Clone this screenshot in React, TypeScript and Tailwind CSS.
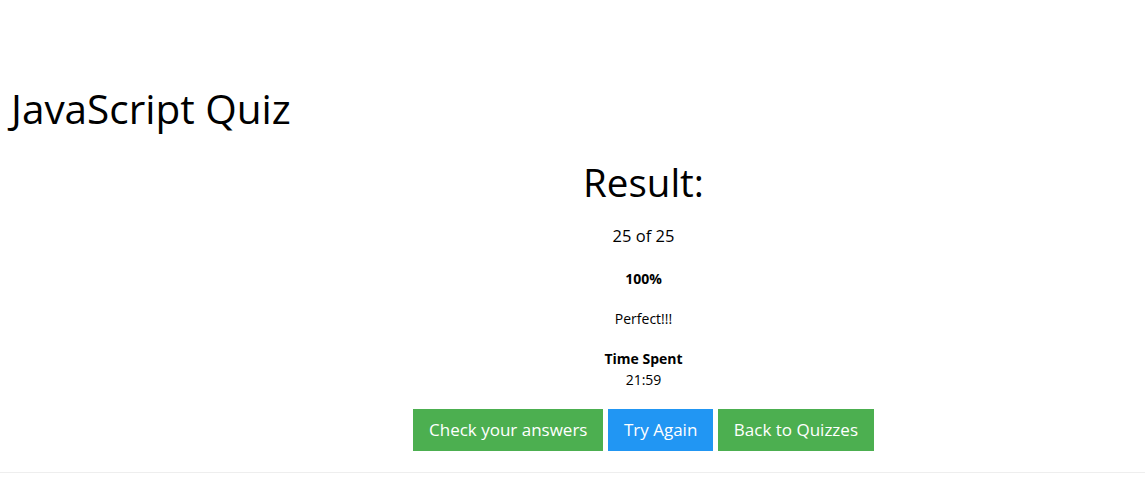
export default function App() {
  return (
    <div className="min-h-[477px] bg-white text-black font-['Open_Sans',sans-serif]">
      <div className="pt-[85px]">
        <h1 className="pl-[11px] text-[40.5px] leading-[1.2] font-normal">JavaScript Quiz</h1>

        <div className="pl-[142px] text-center">
          <h2 className="mt-[25px] text-[38.5px] leading-[1.2] font-normal">Result:</h2>
          <p className="mt-[19px] text-[16.5px] leading-[1.5]">25 of 25</p>
          <p className="mt-[19px] text-[14px] leading-[1.5] font-bold">100%</p>
          <p className="mt-[19px] text-[14px] leading-[1.5]">Perfect!!!</p>
          <div className="mt-[19px] text-[14px] leading-[1.5]">
            <p className="font-bold">Time Spent</p>
            <p>21:59</p>
          </div>
          <div className="mt-[19px] flex justify-center gap-[4.5px]">
            <button className="h-[42px] px-4 bg-[#4CAF50] text-white text-[17px]">Check your answers</button>
            <button className="h-[42px] px-4 bg-[#2196F3] text-white text-[17px]">Try Again</button>
            <button className="h-[42px] px-4 bg-[#4CAF50] text-white text-[17px]">Back to Quizzes</button>
          </div>
        </div>

        <hr className="mt-[21px] border-0 border-t border-[#eeeeee]" />
      </div>
    </div>
  );
}
